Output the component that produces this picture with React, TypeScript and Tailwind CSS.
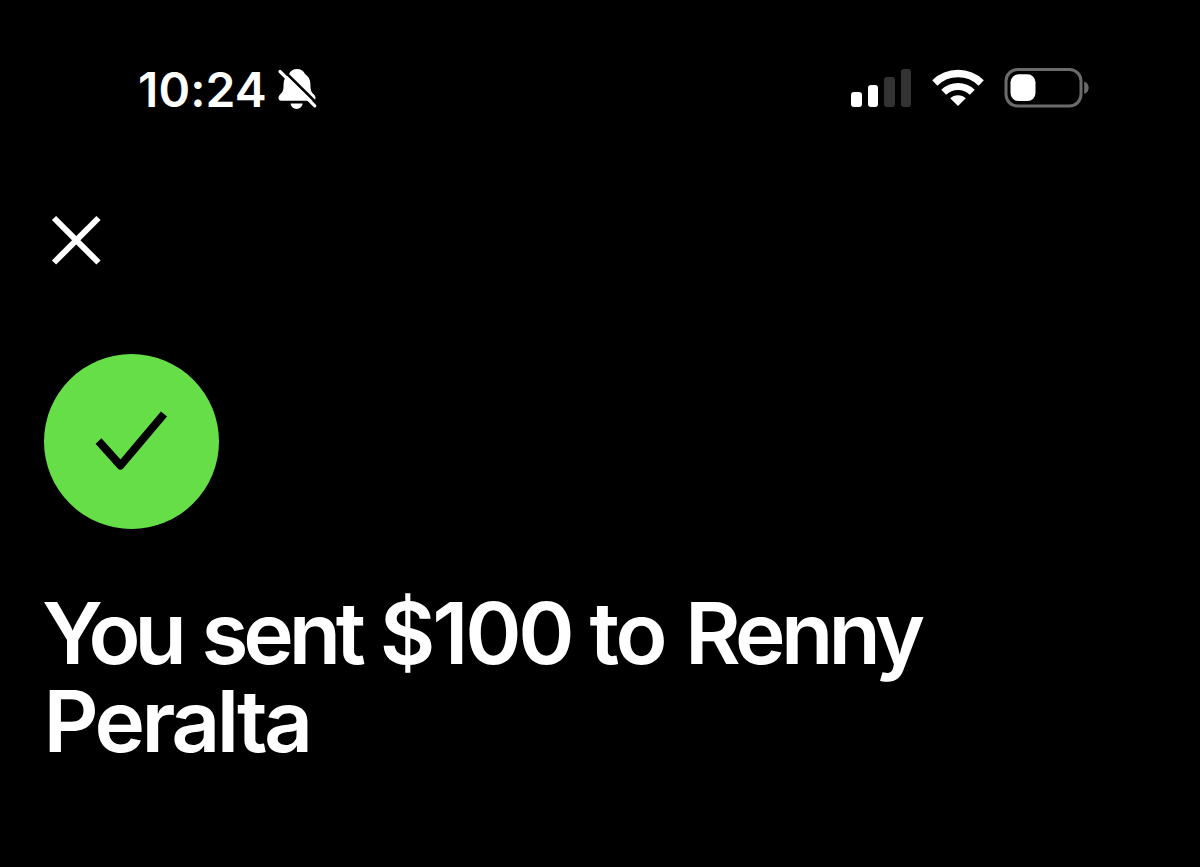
import React from 'react';

function BellOff() {
  return (
    <svg width="44" height="46" viewBox="0 0 44 46" fill="none">
      <path
        d="M21 3c-3.600 0-6.500 1.800-8 5C9.400 10.400 7.600 13.600 7.600 18c0 6.500-.8 7.800-3.500 10.600-1.300 1.400-1.600 2.400-1.600 3.500 0 1.600 1 2.600 2.700 2.600h31.600c1.700 0 2.700-1 2.700-2.600 0-1.100-.3-2.100-1.600-3.500-2.700-2.800-3.500-4.100-3.500-10.600 0-4.400-1.800-7.600-5.400-10-1.500-3.200-4.400-5-8-5Z"
        fill="white"
      />
      <path d="M14.600 37.600h12c-.4 3.200-2.900 5.400-6 5.400s-5.600-2.200-6-5.400Z" fill="white" />
      {/* Gap above the slash */}
      <path d="M4 1L44 40.300" stroke="black" strokeWidth="2.600" />
      <path d="M4 5.500L38.800 39.800" stroke="white" strokeWidth="3.200" strokeLinecap="round" />
    </svg>
  );
}

function Wifi() {
  return (
    <svg width="52" height="38" viewBox="0 0 52 38" fill="none">
      <path d="M2.800 14a33.200 33.200 0 0 1 46.400 0" stroke="white" strokeWidth="7.400" />
      <path d="M11.700 23.200a20.500 20.500 0 0 1 28.600 0" stroke="white" strokeWidth="7" />
      <path d="M18.200 29.300a11.200 11.200 0 0 1 15.600 0L26 37Z" fill="white" />
    </svg>
  );
}

function Signal() {
  return (
    <div className="flex h-[38px] items-end gap-[6px]">
      <div className="h-[15px] w-[10.500px] rounded-[3px] bg-white" />
      <div className="h-[22px] w-[10.500px] rounded-[3px] bg-white" />
      <div className="h-[30px] w-[10.500px] rounded-[3px] bg-[#333333]" />
      <div className="h-[38px] w-[10.500px] rounded-[3px] bg-[#333333]" />
    </div>
  );
}

function Battery() {
  return (
    <svg width="86" height="40" viewBox="0 0 86 40" fill="none">
      <rect x="2" y="1.500" width="75" height="36.500" rx="11.500" stroke="#6b6b6b" strokeWidth="3" />
      <rect x="6.500" y="6.300" width="25" height="26.700" rx="8" fill="white" />
      <path d="M80.200 13.500c2.800 1 4.500 3.300 4.500 6.300s-1.700 5.300-4.500 6.300Z" fill="#6b6b6b" />
    </svg>
  );
}

export default function App() {
  return (
    <main className="h-[867px] w-[1200px] overflow-hidden bg-black font-['Inter',sans-serif] text-white">
      {/* Status bar */}
      <header className="flex h-[114px] items-start pl-[138px] pt-[65px]">
        <span className="w-[138px] pt-px text-[48px] font-semibold leading-[48px] tracking-[0.100px]">10:24</span>
        <div className="pt-px">
          <BellOff />
        </div>
        <div className="ml-[531.400px] flex pt-1">
          <Signal />
          <div className="ml-[20.600px]">
            <Wifi />
          </div>
          <div className="-mt-px ml-5">
            <Battery />
          </div>
        </div>
      </header>

      {/* Close */}
      <button aria-label="Close" className="ml-12 mt-[98px] block">
        <svg width="56" height="56" viewBox="0 0 56 56" fill="none">
          <path d="M6 6L50.500 50.500M50.500 6L6 50.500" stroke="white" strokeWidth="6" />
        </svg>
      </button>

      {/* Success badge */}
      <div className="ml-[43.500px] mt-[86px] flex h-[175px] w-[175px] items-center justify-center rounded-full bg-[#66de48]">
        <svg width="175" height="175" viewBox="0 0 175 175" fill="none">
          <path d="M54.500 87L76.500 111.500L120 60" stroke="black" strokeWidth="8" strokeLinejoin="round" />
        </svg>
      </div>

      <h1 className="ml-[42px] mt-[61px] text-[85.500px] font-semibold leading-[87.500px] tracking-[-3.500px]">
        <span className="mr-[2.500px] tracking-[-6px]">You</span>{' '}
        <span className="mr-px tracking-[-5.200px]">sent</span>{' '}
        <span className="tracking-[-3.200px]">$100</span>{' '}
        <span className="mr-[3px]">to</span>{' '}
        <span className="tracking-[-4.700px]">Renny</span>
        <br />
        <span className="ml-[1.500px]">Peralta</span>
      </h1>
    </main>
  );
}
